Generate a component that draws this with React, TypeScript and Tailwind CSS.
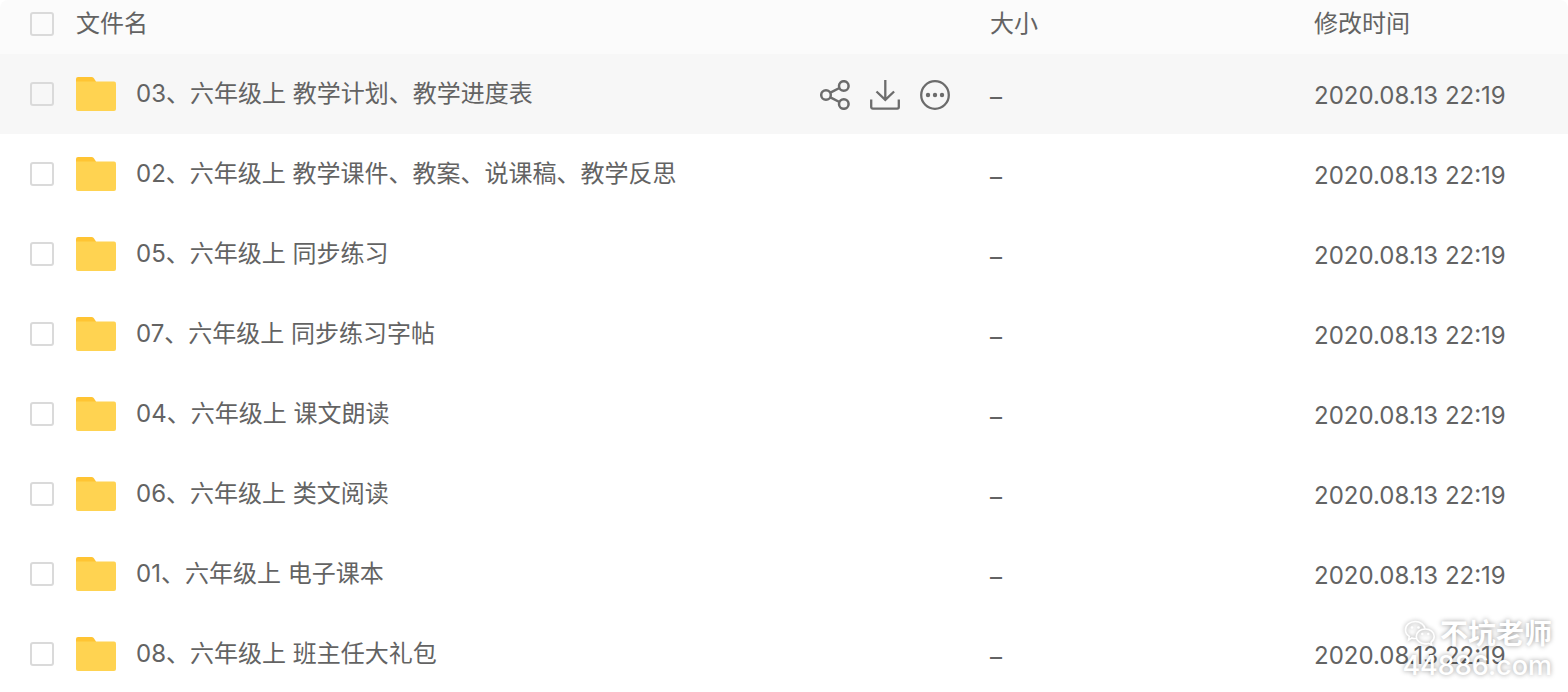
import { useState } from "react";

type FileRow = {
  id: string;
  name: string;
  size: string;
  modified: string;
};

const files: FileRow[] = [
  { id: "f03", name: "03、六年级上 教学计划、教学进度表", size: "–", modified: "2020.08.13 22:19" },
  { id: "f02", name: "02、六年级上 教学课件、教案、说课稿、教学反思", size: "–", modified: "2020.08.13 22:19" },
  { id: "f05", name: "05、六年级上 同步练习", size: "–", modified: "2020.08.13 22:19" },
  { id: "f07", name: "07、六年级上 同步练习字帖", size: "–", modified: "2020.08.13 22:19" },
  { id: "f04", name: "04、六年级上 课文朗读", size: "–", modified: "2020.08.13 22:19" },
  { id: "f06", name: "06、六年级上 类文阅读", size: "–", modified: "2020.08.13 22:19" },
  { id: "f01", name: "01、六年级上 电子课本", size: "–", modified: "2020.08.13 22:19" },
  { id: "f08", name: "08、六年级上 班主任大礼包", size: "–", modified: "2020.08.13 22:19" },
];

function FolderIcon() {
  return (
    <svg viewBox="0 0 40 36" className="h-9 w-10 shrink-0" aria-hidden="true">
      <path d="M0 3A2 2 0 0 1 2 1h13.5a3 3 0 0 1 2.200 1L20 5.500v6H0z" fill="#ffc433" />
      <path d="M0 5.500h38a2 2 0 0 1 2 2V33a2 2 0 0 1-2 2H2a2 2 0 0 1-2-2z" fill="#ffd351" />
    </svg>
  );
}

function ShareIcon() {
  return (
    <svg viewBox="0 0 30 30" className="size-[30px]" fill="none" stroke="currentColor" strokeWidth="2.5" aria-hidden="true">
      <circle cx="6" cy="15" r="4.800" />
      <circle cx="23.800" cy="6" r="4.800" />
      <circle cx="23.800" cy="24" r="4.800" />
      <path d="M10.400 12.600l9-4.600M10.400 17.400l9 4.600" />
    </svg>
  );
}

function DownloadIcon() {
  return (
    <svg viewBox="0 0 30 30" className="size-[30px]" fill="none" stroke="currentColor" strokeWidth="2.3" aria-hidden="true">
      <path d="M15.300 0v20M6.500 11.500l8.800 8.300 8.800-8.300" />
      <path d="M1.200 19.500V27a1.600 1.600 0 0 0 1.600 1.600h24.400a1.600 1.600 0 0 0 1.600-1.600v-7.500" />
    </svg>
  );
}

function MoreIcon() {
  return (
    <svg viewBox="0 0 30 30" className="size-[30px]" fill="none" stroke="currentColor" strokeWidth="2.3" aria-hidden="true">
      <circle cx="15" cy="15" r="13.800" />
      <g fill="currentColor" stroke="none">
        <circle cx="8" cy="15" r="2.200" />
        <circle cx="15" cy="15" r="2.200" />
        <circle cx="22" cy="15" r="2.200" />
      </g>
    </svg>
  );
}

function WechatIcon() {
  return (
    <svg
      viewBox="0 0 32 28"
      className="h-7 w-8 drop-shadow-[0_0_2px_rgba(0,0,0,0.4)]"
      fill="none"
      stroke="white"
      strokeWidth="1.6"
      aria-hidden="true"
    >
      <path d="M12 18.500c-1.600 0-2.800-.2-4-.6L4.500 20l.8-3.600C2.700 14.700 1.500 12.600 1.500 10c0-4.800 4.400-8.500 9.800-8.500 5 0 9 3 9.700 7.200" />
      <path d="M21.300 9c5 0 8.900 3.300 8.900 7.400 0 2.400-1.300 4.400-3.200 5.700l.6 2.900-3-1.600c-1 .3-2.100.5-3.300.5-5 0-9-3.300-9-7.500S16.300 9 21.300 9z" />
      <g fill="white" stroke="none">
        <circle cx="8" cy="7.500" r="1.300" />
        <circle cx="14.500" cy="7.500" r="1.300" />
        <circle cx="18.300" cy="14" r="1.200" />
        <circle cx="24.300" cy="14" r="1.200" />
      </g>
    </svg>
  );
}

function Checkbox({
  label,
  checked,
  onChange,
}: {
  label: string;
  checked: boolean;
  onChange: () => void;
}) {
  return (
    <input
      type="checkbox"
      aria-label={label}
      checked={checked}
      onChange={onChange}
      className="block size-6 appearance-none rounded-[3px] border-2 border-[#dadada] checked:bg-[#ffd351]"
    />
  );
}

export default function App() {
  const [selected, setSelected] = useState<string[]>([]);
  const allSelected = selected.length === files.length;

  const toggle = (id: string) => {
    setSelected((ids) =>
      ids.includes(id) ? ids.filter((item) => item !== id) : [...ids, id],
    );
  };

  return (
    <main className="relative h-screen overflow-hidden bg-white font-[Inter,'Noto_Sans_CJK_SC',sans-serif] text-2xl text-[#636363]">
      <table className="w-full table-fixed text-left">
        <thead>
          <tr className="h-[54px]">
            <th className="w-[76px] rounded-tl-lg bg-[#fbfbfb] pb-1.5 pl-[30px]">
              <Checkbox
                label="全选"
                checked={allSelected}
                onChange={() => setSelected(allSelected ? [] : files.map((file) => file.id))}
              />
            </th>
            <th className="bg-[#fbfbfb] pb-1.5 font-normal">文件名</th>
            <th className="w-[324px] bg-[#fbfbfb] pb-1.5 font-normal">大小</th>
            <th className="w-[254px] rounded-tr-lg bg-[#fbfbfb] pb-1.5 font-normal">修改时间</th>
          </tr>
        </thead>
        <tbody>
          {files.map((file, index) => (
            <tr key={file.id} className="h-20 first:bg-[#f7f7f7] hover:bg-[#f7f7f7]">
              <td className="pl-[30px]">
                <Checkbox
                  label={file.name}
                  checked={selected.includes(file.id)}
                  onChange={() => toggle(file.id)}
                />
              </td>
              <td className="pr-10">
                <div className="flex items-center">
                  <FolderIcon />
                  <span className="ml-5 flex-1 truncate">{file.name}</span>
                  {index === 0 && (
                    <div className="mt-0.5 flex gap-5 text-[#6c6c6c]">
                      <button type="button" aria-label="分享">
                        <ShareIcon />
                      </button>
                      <button type="button" aria-label="下载">
                        <DownloadIcon />
                      </button>
                      <button type="button" aria-label="更多">
                        <MoreIcon />
                      </button>
                    </div>
                  )}
                </div>
              </td>
              <td className="pt-1.5">{file.size}</td>
              <td className="pt-1 whitespace-nowrap">{file.modified}</td>
            </tr>
          ))}
        </tbody>
      </table>
      <div className="pointer-events-none absolute right-4 bottom-2.5 flex flex-col items-end text-white [text-shadow:0_0_5px_rgba(0,0,0,0.4)]">
        <div className="flex items-center gap-1">
          <WechatIcon />
          <span className="text-[28px] leading-8 font-bold">不坑老师</span>
        </div>
        <span className="text-[27px] leading-8 font-medium">44886.com</span>
      </div>
    </main>
  );
}
